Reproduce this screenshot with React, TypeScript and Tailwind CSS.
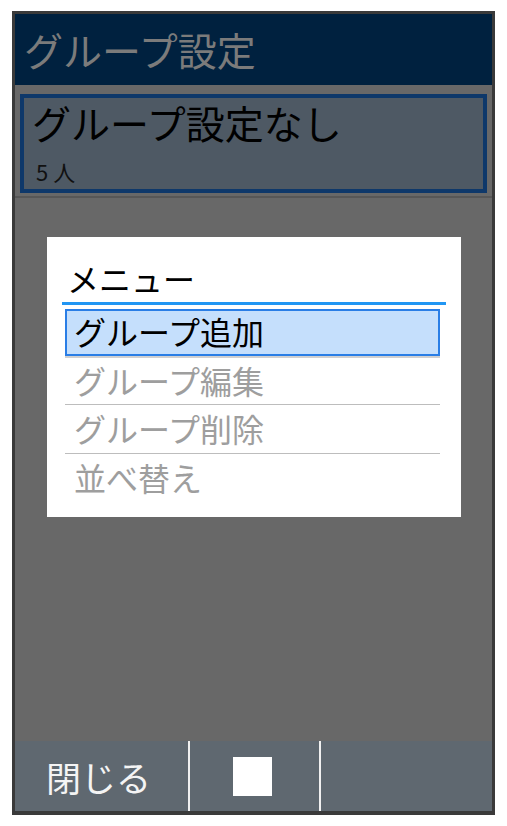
import React from "react";

const jp = { fontFamily: '"Noto Sans CJK JP", "Noto Sans", sans-serif' };

export default function App() {
  return (
    <div className="w-[507px] h-[826px] bg-white relative" style={jp}>
      <div className="absolute left-[12px] top-[11px] w-[483px] h-[804px] border-[3px] border-b-[4px] border-[#3a3a3a] bg-[#686868] flex flex-col">
        <div className="h-[71px] bg-[#00213f] flex items-center pl-[9px] shrink-0">
          <span className="text-[39px] leading-none text-[#7b7b7b]">グループ設定</span>
        </div>
        <div className="pt-[9px] px-[5px] pr-[5px] shrink-0">
          <div className="h-[99px] border-[4px] border-[#0e386a] bg-[#4e5964] flex flex-col pl-[8px]">
            <span className="text-[39px] leading-none text-black mt-[5px]">グループ設定なし</span>
            <span className="text-[22px] leading-none text-[#111] mt-[18px] pl-[4px]">5 人</span>
          </div>
        </div>
        <div className="h-[2px] bg-[#575757] mt-[3px] shrink-0" />
        <div className="flex-1" />
        <div className="h-[70px] bg-[#5f6870] flex shrink-0">
          <div className="w-[173px] flex items-center pl-[31px]">
            <span className="text-[35px] leading-none text-[#f4f4f4]">閉じる</span>
          </div>
          <div className="w-[2px] bg-[#f0f0f0]" />
          <div className="w-[129px] flex items-center pl-[43px]">
            <div className="w-[39px] h-[39px] bg-white" />
          </div>
          <div className="w-[2px] bg-[#f0f0f0]" />
          <div className="flex-1" />
        </div>
      </div>

      <div className="absolute left-[47px] top-[237px] w-[414px] h-[280px] bg-white flex flex-col">
        <div className="pl-[20px] pt-[25px] h-[65px]">
          <span className="text-[32px] leading-none text-black">メニュー</span>
        </div>
        <div className="ml-[15px] w-[384px] h-[3px] bg-[#2196f3]" />
        <div className="ml-[18px] w-[375px] mt-[4px] flex flex-col">
          <div className="h-[47px] bg-[#c5dffc] border-[2px] border-[#2a7ee6] flex items-center pl-[7px]">
            <span className="text-[32px] leading-none text-black -mt-[3px]">グループ追加</span>
          </div>
          <div className="h-[2px] bg-[#d0d0d0]" />
          <div className="h-[47px] flex items-center pl-[9px] border-b border-[#bdbdbd]">
            <span className="text-[32px] leading-none text-[#9e9e9e] -mt-[2px]">グループ編集</span>
          </div>
          <div className="h-[49px] flex items-center pl-[9px] border-b border-[#bdbdbd]">
            <span className="text-[32px] leading-none text-[#9e9e9e] -mt-[2px]">グループ削除</span>
          </div>
          <div className="h-[48px] flex items-center pl-[9px]">
            <span className="text-[32px] leading-none text-[#9e9e9e] -mt-[2px]">並べ替え</span>
          </div>
        </div>
      </div>
    </div>
  );
}
